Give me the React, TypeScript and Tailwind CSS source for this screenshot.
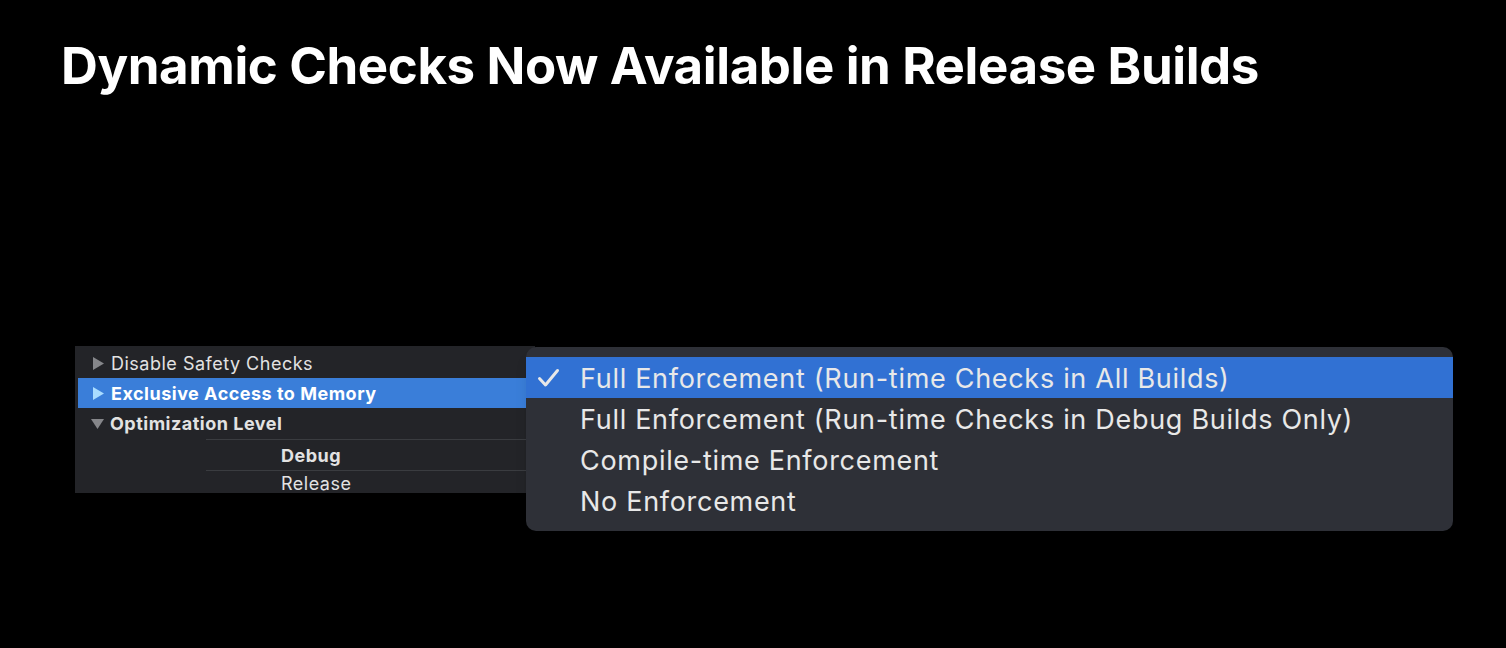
const options = [
  'Full Enforcement (Run-time Checks in All Builds)',
  'Full Enforcement (Run-time Checks in Debug Builds Only)',
  'Compile-time Enforcement',
  'No Enforcement',
]

function Triangle({ open, color }: { open?: boolean; color: string }) {
  return (
    <svg width="13" height="13" viewBox="0 0 13 13" className="shrink-0">
      {open ? (
        <polygon points="0,2 13,2 6.5,12" fill={color} />
      ) : (
        <polygon points="1,0 12,6.5 1,13" fill={color} />
      )}
    </svg>
  )
}

export default function App() {
  return (
    <div className="h-[648px] w-full overflow-hidden bg-black font-['Inter',sans-serif]">
      <h1 className="pl-[61px] pt-[36px] text-[51px] leading-[60px] font-bold tracking-[-0.4px] text-white">
        Dynamic Checks Now Available in Release Builds
      </h1>

      <div className="relative ml-[75px] mt-[250px] w-[460px]">
        {/* build settings table */}
        <div className="h-[147px] bg-[#232428] pt-[2px] text-[18px] tracking-[0.5px] text-[#e2e2e2]">
          <div className="flex h-[30px] items-center gap-[6px] pl-[17px]">
            <Triangle color="#85868a" />
            <span>Disable Safety Checks</span>
          </div>
          <div className="ml-[3px] flex h-[30px] items-center gap-[6px] bg-[#3a7ed9] pl-[14px] font-bold text-white">
            <Triangle color="#a9dcff" />
            <span>Exclusive Access to Memory</span>
          </div>
          <div className="flex h-[31px] items-center gap-[6px] pl-[16px] font-bold">
            <Triangle open color="#85868a" />
            <span>Optimization Level</span>
          </div>
          <div className="ml-[131px] flex h-[31px] items-center border-t border-[#3a3c40] pl-[75px] font-bold">
            Debug
          </div>
          <div className="ml-[131px] h-[22px] border-t border-[#3a3c40] pt-[4px] pl-[75px] leading-[18px]">
            Release
          </div>
        </div>

        {/* popup menu */}
        <div className="absolute top-px left-[451px] w-[927px] rounded-[10px] bg-[#2e3037] py-[10px] text-[27px] tracking-[0.7px] text-[#e8e8e8] shadow-lg">
          {options.map((o, i) => (
            <div
              key={o}
              className={`flex h-[41px] items-center ${i === 0 ? 'bg-[#3171d3]' : ''}`}
            >
              <span className="flex w-[54px] shrink-0 pl-[11px]">
                {i === 0 && (
                  <svg width="23" height="20" viewBox="0 0 23 20">
                    <polyline
                      points="2.5,10.5 8.5,17 20.5,2.5"
                      fill="none"
                      stroke="#e8e8e8"
                      strokeWidth="3"
                      strokeLinecap="round"
                      strokeLinejoin="round"
                    />
                  </svg>
                )}
              </span>
              <span className="pt-[3px]">{o}</span>
            </div>
          ))}
        </div>
      </div>
    </div>
  )
}
